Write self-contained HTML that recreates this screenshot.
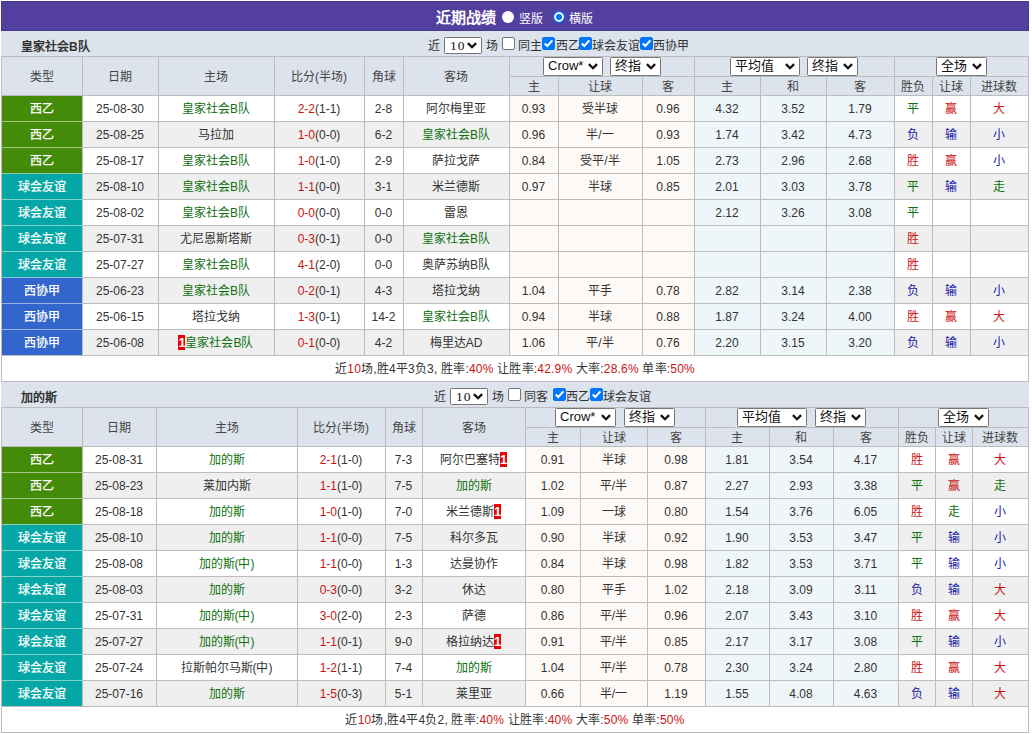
<!DOCTYPE html><html lang="zh-CN"><head><meta charset="utf-8"><style>
html,body{margin:0;padding:0;background:#fff;}
body{width:1032px;height:734px;overflow:hidden;position:relative;font-family:"Liberation Sans",sans-serif;font-size:12px;color:#333;}
body>div{position:absolute;}
.t{text-align:center;white-space:nowrap;color:#333;}
.l{white-space:nowrap;}
.sel{background:#fff;border:1px solid #767676;border-radius:1.5px;box-sizing:border-box;font-size:13px;color:#111;line-height:16px;}
.sel .sl{position:absolute;left:4px;top:0px;}
.sel .chev{position:absolute;right:4px;top:5px;}
.cb{width:13px;height:13px;box-sizing:border-box;border:1px solid #767676;border-radius:2px;background:#fff;}
.cb.on{background:#0075ff;border-color:#0075ff;}
.cb svg{position:absolute;left:-1px;top:-1px;}
.radio{width:12px;height:12px;border-radius:50%;background:#fff;box-sizing:border-box;}
.radio.on{background:#0075ff;border:1px solid #0075ff;box-shadow:inset 0 0 0 2px #fff;}
.rc{display:inline-block;background:#e00;color:#fff;font-weight:bold;width:7px;height:15px;line-height:15px;text-align:center;vertical-align:middle;font-size:13px;position:relative;top:-1px;overflow:hidden;}
</style></head><body><div style="left:1px;top:1px;width:1028px;height:30px;background:#523f9e;border:1px solid #463a8c;box-sizing:border-box"></div>
<div class="l" style="left:436px;top:3px;height:30px;line-height:30px;font-weight:bold;font-size:15px;color:#fff">近期战绩</div>
<div class="radio" style="left:502px;top:11px"></div>
<div class="l" style="left:519px;top:4px;height:30px;line-height:30px;color:#fff">竖版</div>
<div class="radio on" style="left:553px;top:11px"></div>
<div class="l" style="left:569px;top:4px;height:30px;line-height:30px;color:#fff">横版</div>
<div style="left:1px;top:31px;width:1028px;height:25px;background:#dde3ec;"></div>
<div class="l" style="left:21px;top:35px;height:25px;line-height:25px;font-weight:bold;color:#333;">皇家社会B队</div>
<div class="l" style="left:428px;top:34px;height:25px;line-height:25px;">近</div>
<div class="sel" style="left:444px;top:37px;width:38px;height:17px;"><span class="sl" style="font-family:'Liberation Serif',serif;font-size:13.5px;left:5px;top:0px;letter-spacing:1px">10</span><svg class="chev" style="top:4px" width="10" height="7" viewBox="0 0 10 7"><path d="M0.9 1.1 L5 5.2 L9.1 1.1" fill="none" stroke="#111" stroke-width="2.3"/></svg></div>
<div class="l" style="left:486px;top:34px;height:25px;line-height:25px;">场</div>
<div class="cb" style="left:502px;top:37px"></div>
<div class="l" style="left:518px;top:34px;height:25px;line-height:25px;">同主</div>
<div class="cb on" style="left:542px;top:37px"><svg width="13" height="13" viewBox="0 0 13 13"><path d="M2.8 6.4 L5.3 9 L10.4 3.4" fill="none" stroke="#fff" stroke-width="2.1"/></svg></div>
<div class="l" style="left:556px;top:34px;height:25px;line-height:25px;">西乙</div>
<div class="cb on" style="left:579px;top:37px"><svg width="13" height="13" viewBox="0 0 13 13"><path d="M2.8 6.4 L5.3 9 L10.4 3.4" fill="none" stroke="#fff" stroke-width="2.1"/></svg></div>
<div class="l" style="left:592px;top:34px;height:25px;line-height:25px;">球会友谊</div>
<div class="cb on" style="left:640px;top:37px"><svg width="13" height="13" viewBox="0 0 13 13"><path d="M2.8 6.4 L5.3 9 L10.4 3.4" fill="none" stroke="#fff" stroke-width="2.1"/></svg></div>
<div class="l" style="left:653px;top:34px;height:25px;line-height:25px;">西协甲</div>
<div style="left:1px;top:56px;width:1028px;height:39px;background:#dde3ec;"></div>
<div style="left:2px;top:96px;width:1026px;height:25px;background:#fff;"></div>
<div style="left:2px;top:95px;width:80px;height:26px;background:#448b0a;"></div>
<div style="left:510px;top:96px;width:184px;height:25px;background:#fdf9f6;"></div>
<div style="left:695px;top:96px;width:199px;height:25px;background:#eef6fa;"></div>
<div style="left:2px;top:122px;width:1026px;height:25px;background:#efefef;"></div>
<div style="left:2px;top:121px;width:80px;height:26px;background:#448b0a;"></div>
<div style="left:510px;top:122px;width:184px;height:25px;background:#fdf9f6;"></div>
<div style="left:695px;top:122px;width:199px;height:25px;background:#eef6fa;"></div>
<div style="left:2px;top:148px;width:1026px;height:25px;background:#fff;"></div>
<div style="left:2px;top:147px;width:80px;height:26px;background:#448b0a;"></div>
<div style="left:510px;top:148px;width:184px;height:25px;background:#fdf9f6;"></div>
<div style="left:695px;top:148px;width:199px;height:25px;background:#eef6fa;"></div>
<div style="left:2px;top:174px;width:1026px;height:25px;background:#efefef;"></div>
<div style="left:2px;top:173px;width:80px;height:26px;background:#04a7a6;"></div>
<div style="left:510px;top:174px;width:184px;height:25px;background:#fdf9f6;"></div>
<div style="left:695px;top:174px;width:199px;height:25px;background:#eef6fa;"></div>
<div style="left:2px;top:200px;width:1026px;height:25px;background:#fff;"></div>
<div style="left:2px;top:199px;width:80px;height:26px;background:#04a7a6;"></div>
<div style="left:510px;top:200px;width:184px;height:25px;background:#fdf9f6;"></div>
<div style="left:695px;top:200px;width:199px;height:25px;background:#eef6fa;"></div>
<div style="left:2px;top:226px;width:1026px;height:25px;background:#efefef;"></div>
<div style="left:2px;top:225px;width:80px;height:26px;background:#04a7a6;"></div>
<div style="left:510px;top:226px;width:184px;height:25px;background:#fdf9f6;"></div>
<div style="left:695px;top:226px;width:199px;height:25px;background:#eef6fa;"></div>
<div style="left:2px;top:252px;width:1026px;height:25px;background:#fff;"></div>
<div style="left:2px;top:251px;width:80px;height:26px;background:#04a7a6;"></div>
<div style="left:510px;top:252px;width:184px;height:25px;background:#fdf9f6;"></div>
<div style="left:695px;top:252px;width:199px;height:25px;background:#eef6fa;"></div>
<div style="left:2px;top:278px;width:1026px;height:25px;background:#efefef;"></div>
<div style="left:2px;top:277px;width:80px;height:26px;background:#3366cc;"></div>
<div style="left:510px;top:278px;width:184px;height:25px;background:#fdf9f6;"></div>
<div style="left:695px;top:278px;width:199px;height:25px;background:#eef6fa;"></div>
<div style="left:2px;top:304px;width:1026px;height:25px;background:#fff;"></div>
<div style="left:2px;top:303px;width:80px;height:26px;background:#3366cc;"></div>
<div style="left:510px;top:304px;width:184px;height:25px;background:#fdf9f6;"></div>
<div style="left:695px;top:304px;width:199px;height:25px;background:#eef6fa;"></div>
<div style="left:2px;top:330px;width:1026px;height:25px;background:#efefef;"></div>
<div style="left:2px;top:329px;width:80px;height:26px;background:#3366cc;"></div>
<div style="left:510px;top:330px;width:184px;height:25px;background:#fdf9f6;"></div>
<div style="left:695px;top:330px;width:199px;height:25px;background:#eef6fa;"></div>
<div style="left:2px;top:356px;width:1026px;height:25px;background:#fff;"></div>
<div style="left:1px;top:56px;width:1028px;height:1px;background:#bcbcbc"></div>
<div style="left:509px;top:76px;width:519px;height:1px;background:#bcbcbc"></div>
<div style="left:1px;top:95px;width:1028px;height:1px;background:#bcbcbc"></div>
<div style="left:1px;top:121px;width:1028px;height:1px;background:#bcbcbc"></div>
<div style="left:1px;top:147px;width:1028px;height:1px;background:#bcbcbc"></div>
<div style="left:1px;top:173px;width:1028px;height:1px;background:#bcbcbc"></div>
<div style="left:1px;top:199px;width:1028px;height:1px;background:#bcbcbc"></div>
<div style="left:1px;top:225px;width:1028px;height:1px;background:#bcbcbc"></div>
<div style="left:1px;top:251px;width:1028px;height:1px;background:#bcbcbc"></div>
<div style="left:1px;top:277px;width:1028px;height:1px;background:#bcbcbc"></div>
<div style="left:1px;top:303px;width:1028px;height:1px;background:#bcbcbc"></div>
<div style="left:1px;top:329px;width:1028px;height:1px;background:#bcbcbc"></div>
<div style="left:1px;top:355px;width:1028px;height:1px;background:#bcbcbc"></div>
<div style="left:1px;top:381px;width:1028px;height:1px;background:#bcbcbc"></div>
<div style="left:2px;top:121px;width:80px;height:1px;background:#a1c584"></div>
<div style="left:2px;top:147px;width:80px;height:1px;background:#a1c584"></div>
<div style="left:2px;top:173px;width:80px;height:1px;background:#91ccab"></div>
<div style="left:2px;top:199px;width:80px;height:1px;background:#81d3d2"></div>
<div style="left:2px;top:225px;width:80px;height:1px;background:#81d3d2"></div>
<div style="left:2px;top:251px;width:80px;height:1px;background:#81d3d2"></div>
<div style="left:2px;top:277px;width:80px;height:1px;background:#8dc2dc"></div>
<div style="left:2px;top:303px;width:80px;height:1px;background:#99b2e5"></div>
<div style="left:2px;top:329px;width:80px;height:1px;background:#99b2e5"></div>
<div style="left:1px;top:56px;width:1px;height:326px;background:#bcbcbc"></div>
<div style="left:1028px;top:56px;width:1px;height:326px;background:#bcbcbc"></div>
<div style="left:82px;top:56px;width:1px;height:299px;background:#bcbcbc"></div>
<div style="left:158px;top:56px;width:1px;height:299px;background:#bcbcbc"></div>
<div style="left:274px;top:56px;width:1px;height:299px;background:#bcbcbc"></div>
<div style="left:364px;top:56px;width:1px;height:299px;background:#bcbcbc"></div>
<div style="left:403px;top:56px;width:1px;height:299px;background:#bcbcbc"></div>
<div style="left:509px;top:56px;width:1px;height:299px;background:#bcbcbc"></div>
<div style="left:558px;top:76px;width:1px;height:279px;background:#bcbcbc"></div>
<div style="left:642px;top:76px;width:1px;height:279px;background:#bcbcbc"></div>
<div style="left:694px;top:56px;width:1px;height:299px;background:#bcbcbc"></div>
<div style="left:760px;top:76px;width:1px;height:279px;background:#bcbcbc"></div>
<div style="left:826px;top:76px;width:1px;height:279px;background:#bcbcbc"></div>
<div style="left:894px;top:56px;width:1px;height:299px;background:#bcbcbc"></div>
<div style="left:932px;top:76px;width:1px;height:279px;background:#bcbcbc"></div>
<div style="left:970px;top:76px;width:1px;height:279px;background:#bcbcbc"></div>
<div class="t" style="left:1px;top:58px;width:81px;height:38px;line-height:38px;color:#444">类型</div>
<div class="t" style="left:82px;top:58px;width:76px;height:38px;line-height:38px;color:#444">日期</div>
<div class="t" style="left:158px;top:58px;width:116px;height:38px;line-height:38px;color:#444">主场</div>
<div class="t" style="left:274px;top:58px;width:90px;height:38px;line-height:38px;color:#444">比分(半场)</div>
<div class="t" style="left:364px;top:58px;width:39px;height:38px;line-height:38px;color:#444">角球</div>
<div class="t" style="left:403px;top:58px;width:106px;height:38px;line-height:38px;color:#444">客场</div>
<div class="t" style="left:509px;top:78px;width:49px;height:18px;line-height:18px;color:#444">主</div>
<div class="t" style="left:558px;top:78px;width:84px;height:18px;line-height:18px;color:#444">让球</div>
<div class="t" style="left:642px;top:78px;width:52px;height:18px;line-height:18px;color:#444">客</div>
<div class="t" style="left:694px;top:78px;width:66px;height:18px;line-height:18px;color:#444">主</div>
<div class="t" style="left:760px;top:78px;width:66px;height:18px;line-height:18px;color:#444">和</div>
<div class="t" style="left:826px;top:78px;width:68px;height:18px;line-height:18px;color:#444">客</div>
<div class="t" style="left:894px;top:78px;width:38px;height:18px;line-height:18px;color:#444">胜负</div>
<div class="t" style="left:932px;top:78px;width:38px;height:18px;line-height:18px;color:#444">让球</div>
<div class="t" style="left:970px;top:78px;width:58px;height:18px;line-height:18px;color:#444">进球数</div>
<div class="sel" style="left:543px;top:57px;width:60px;height:19px;"><span class="sl" style="">Crow*</span><svg class="chev" style="top:5px" width="10" height="7" viewBox="0 0 10 7"><path d="M0.9 1.1 L5 5.2 L9.1 1.1" fill="none" stroke="#111" stroke-width="2.3"/></svg></div>
<div class="sel" style="left:610px;top:57px;width:51px;height:19px;"><span class="sl" style="">终指</span><svg class="chev" style="top:5px" width="10" height="7" viewBox="0 0 10 7"><path d="M0.9 1.1 L5 5.2 L9.1 1.1" fill="none" stroke="#111" stroke-width="2.3"/></svg></div>
<div class="sel" style="left:730px;top:57px;width:70px;height:19px;"><span class="sl" style="">平均值</span><svg class="chev" style="top:5px" width="10" height="7" viewBox="0 0 10 7"><path d="M0.9 1.1 L5 5.2 L9.1 1.1" fill="none" stroke="#111" stroke-width="2.3"/></svg></div>
<div class="sel" style="left:807px;top:57px;width:51px;height:19px;"><span class="sl" style="">终指</span><svg class="chev" style="top:5px" width="10" height="7" viewBox="0 0 10 7"><path d="M0.9 1.1 L5 5.2 L9.1 1.1" fill="none" stroke="#111" stroke-width="2.3"/></svg></div>
<div class="sel" style="left:936px;top:57px;width:51px;height:19px;"><span class="sl" style="">全场</span><svg class="chev" style="top:5px" width="10" height="7" viewBox="0 0 10 7"><path d="M0.9 1.1 L5 5.2 L9.1 1.1" fill="none" stroke="#111" stroke-width="2.3"/></svg></div>
<div class="t" style="left:1px;top:97px;width:81px;height:25px;line-height:25px;color:#fff;-webkit-text-stroke:0.25px #fff">西乙</div>
<div class="t" style="left:82px;top:97px;width:76px;height:25px;line-height:25px;">25-08-30</div>
<div class="t" style="left:158px;top:97px;width:116px;height:25px;line-height:25px;"><span style="color:#0e700e">皇家社会B队</span></div>
<div class="t" style="left:274px;top:97px;width:90px;height:25px;line-height:25px;"><span style="color:#c81414">2-2</span>(1-1)</div>
<div class="t" style="left:364px;top:97px;width:39px;height:25px;line-height:25px;">2-8</div>
<div class="t" style="left:403px;top:97px;width:106px;height:25px;line-height:25px;"><span style="color:#333">阿尔梅里亚</span></div>
<div class="t" style="left:509px;top:97px;width:49px;height:25px;line-height:25px;">0.93</div>
<div class="t" style="left:558px;top:97px;width:84px;height:25px;line-height:25px;">受半球</div>
<div class="t" style="left:642px;top:97px;width:52px;height:25px;line-height:25px;">0.96</div>
<div class="t" style="left:694px;top:97px;width:66px;height:25px;line-height:25px;">4.32</div>
<div class="t" style="left:760px;top:97px;width:66px;height:25px;line-height:25px;">3.52</div>
<div class="t" style="left:826px;top:97px;width:68px;height:25px;line-height:25px;">1.79</div>
<div class="t" style="left:894px;top:97px;width:38px;height:25px;line-height:25px;color:#0e700e">平</div>
<div class="t" style="left:932px;top:97px;width:38px;height:25px;line-height:25px;color:#c81414">赢</div>
<div class="t" style="left:970px;top:97px;width:58px;height:25px;line-height:25px;color:#c81414">大</div>
<div class="t" style="left:1px;top:123px;width:81px;height:25px;line-height:25px;color:#fff;-webkit-text-stroke:0.25px #fff">西乙</div>
<div class="t" style="left:82px;top:123px;width:76px;height:25px;line-height:25px;">25-08-25</div>
<div class="t" style="left:158px;top:123px;width:116px;height:25px;line-height:25px;"><span style="color:#333">马拉加</span></div>
<div class="t" style="left:274px;top:123px;width:90px;height:25px;line-height:25px;"><span style="color:#c81414">1-0</span>(0-0)</div>
<div class="t" style="left:364px;top:123px;width:39px;height:25px;line-height:25px;">6-2</div>
<div class="t" style="left:403px;top:123px;width:106px;height:25px;line-height:25px;"><span style="color:#0e700e">皇家社会B队</span></div>
<div class="t" style="left:509px;top:123px;width:49px;height:25px;line-height:25px;">0.96</div>
<div class="t" style="left:558px;top:123px;width:84px;height:25px;line-height:25px;">半/一</div>
<div class="t" style="left:642px;top:123px;width:52px;height:25px;line-height:25px;">0.93</div>
<div class="t" style="left:694px;top:123px;width:66px;height:25px;line-height:25px;">1.74</div>
<div class="t" style="left:760px;top:123px;width:66px;height:25px;line-height:25px;">3.42</div>
<div class="t" style="left:826px;top:123px;width:68px;height:25px;line-height:25px;">4.73</div>
<div class="t" style="left:894px;top:123px;width:38px;height:25px;line-height:25px;color:#1818a8">负</div>
<div class="t" style="left:932px;top:123px;width:38px;height:25px;line-height:25px;color:#1818a8">输</div>
<div class="t" style="left:970px;top:123px;width:58px;height:25px;line-height:25px;color:#1818a8">小</div>
<div class="t" style="left:1px;top:149px;width:81px;height:25px;line-height:25px;color:#fff;-webkit-text-stroke:0.25px #fff">西乙</div>
<div class="t" style="left:82px;top:149px;width:76px;height:25px;line-height:25px;">25-08-17</div>
<div class="t" style="left:158px;top:149px;width:116px;height:25px;line-height:25px;"><span style="color:#0e700e">皇家社会B队</span></div>
<div class="t" style="left:274px;top:149px;width:90px;height:25px;line-height:25px;"><span style="color:#c81414">1-0</span>(1-0)</div>
<div class="t" style="left:364px;top:149px;width:39px;height:25px;line-height:25px;">2-9</div>
<div class="t" style="left:403px;top:149px;width:106px;height:25px;line-height:25px;"><span style="color:#333">萨拉戈萨</span></div>
<div class="t" style="left:509px;top:149px;width:49px;height:25px;line-height:25px;">0.84</div>
<div class="t" style="left:558px;top:149px;width:84px;height:25px;line-height:25px;">受平/半</div>
<div class="t" style="left:642px;top:149px;width:52px;height:25px;line-height:25px;">1.05</div>
<div class="t" style="left:694px;top:149px;width:66px;height:25px;line-height:25px;">2.73</div>
<div class="t" style="left:760px;top:149px;width:66px;height:25px;line-height:25px;">2.96</div>
<div class="t" style="left:826px;top:149px;width:68px;height:25px;line-height:25px;">2.68</div>
<div class="t" style="left:894px;top:149px;width:38px;height:25px;line-height:25px;color:#c81414">胜</div>
<div class="t" style="left:932px;top:149px;width:38px;height:25px;line-height:25px;color:#c81414">赢</div>
<div class="t" style="left:970px;top:149px;width:58px;height:25px;line-height:25px;color:#1818a8">小</div>
<div class="t" style="left:1px;top:175px;width:81px;height:25px;line-height:25px;color:#fff;-webkit-text-stroke:0.25px #fff">球会友谊</div>
<div class="t" style="left:82px;top:175px;width:76px;height:25px;line-height:25px;">25-08-10</div>
<div class="t" style="left:158px;top:175px;width:116px;height:25px;line-height:25px;"><span style="color:#0e700e">皇家社会B队</span></div>
<div class="t" style="left:274px;top:175px;width:90px;height:25px;line-height:25px;"><span style="color:#c81414">1-1</span>(0-0)</div>
<div class="t" style="left:364px;top:175px;width:39px;height:25px;line-height:25px;">3-1</div>
<div class="t" style="left:403px;top:175px;width:106px;height:25px;line-height:25px;"><span style="color:#333">米兰德斯</span></div>
<div class="t" style="left:509px;top:175px;width:49px;height:25px;line-height:25px;">0.97</div>
<div class="t" style="left:558px;top:175px;width:84px;height:25px;line-height:25px;">半球</div>
<div class="t" style="left:642px;top:175px;width:52px;height:25px;line-height:25px;">0.85</div>
<div class="t" style="left:694px;top:175px;width:66px;height:25px;line-height:25px;">2.01</div>
<div class="t" style="left:760px;top:175px;width:66px;height:25px;line-height:25px;">3.03</div>
<div class="t" style="left:826px;top:175px;width:68px;height:25px;line-height:25px;">3.78</div>
<div class="t" style="left:894px;top:175px;width:38px;height:25px;line-height:25px;color:#0e700e">平</div>
<div class="t" style="left:932px;top:175px;width:38px;height:25px;line-height:25px;color:#1818a8">输</div>
<div class="t" style="left:970px;top:175px;width:58px;height:25px;line-height:25px;color:#0e700e">走</div>
<div class="t" style="left:1px;top:201px;width:81px;height:25px;line-height:25px;color:#fff;-webkit-text-stroke:0.25px #fff">球会友谊</div>
<div class="t" style="left:82px;top:201px;width:76px;height:25px;line-height:25px;">25-08-02</div>
<div class="t" style="left:158px;top:201px;width:116px;height:25px;line-height:25px;"><span style="color:#0e700e">皇家社会B队</span></div>
<div class="t" style="left:274px;top:201px;width:90px;height:25px;line-height:25px;"><span style="color:#c81414">0-0</span>(0-0)</div>
<div class="t" style="left:364px;top:201px;width:39px;height:25px;line-height:25px;">0-0</div>
<div class="t" style="left:403px;top:201px;width:106px;height:25px;line-height:25px;"><span style="color:#333">雷恩</span></div>
<div class="t" style="left:694px;top:201px;width:66px;height:25px;line-height:25px;">2.12</div>
<div class="t" style="left:760px;top:201px;width:66px;height:25px;line-height:25px;">3.26</div>
<div class="t" style="left:826px;top:201px;width:68px;height:25px;line-height:25px;">3.08</div>
<div class="t" style="left:894px;top:201px;width:38px;height:25px;line-height:25px;color:#0e700e">平</div>
<div class="t" style="left:1px;top:227px;width:81px;height:25px;line-height:25px;color:#fff;-webkit-text-stroke:0.25px #fff">球会友谊</div>
<div class="t" style="left:82px;top:227px;width:76px;height:25px;line-height:25px;">25-07-31</div>
<div class="t" style="left:158px;top:227px;width:116px;height:25px;line-height:25px;"><span style="color:#333">尤尼恩斯塔斯</span></div>
<div class="t" style="left:274px;top:227px;width:90px;height:25px;line-height:25px;"><span style="color:#c81414">0-3</span>(0-1)</div>
<div class="t" style="left:364px;top:227px;width:39px;height:25px;line-height:25px;">0-0</div>
<div class="t" style="left:403px;top:227px;width:106px;height:25px;line-height:25px;"><span style="color:#0e700e">皇家社会B队</span></div>
<div class="t" style="left:894px;top:227px;width:38px;height:25px;line-height:25px;color:#c81414">胜</div>
<div class="t" style="left:1px;top:253px;width:81px;height:25px;line-height:25px;color:#fff;-webkit-text-stroke:0.25px #fff">球会友谊</div>
<div class="t" style="left:82px;top:253px;width:76px;height:25px;line-height:25px;">25-07-27</div>
<div class="t" style="left:158px;top:253px;width:116px;height:25px;line-height:25px;"><span style="color:#0e700e">皇家社会B队</span></div>
<div class="t" style="left:274px;top:253px;width:90px;height:25px;line-height:25px;"><span style="color:#c81414">4-1</span>(2-0)</div>
<div class="t" style="left:364px;top:253px;width:39px;height:25px;line-height:25px;">0-0</div>
<div class="t" style="left:403px;top:253px;width:106px;height:25px;line-height:25px;"><span style="color:#333">奥萨苏纳B队</span></div>
<div class="t" style="left:894px;top:253px;width:38px;height:25px;line-height:25px;color:#c81414">胜</div>
<div class="t" style="left:1px;top:279px;width:81px;height:25px;line-height:25px;color:#fff;-webkit-text-stroke:0.25px #fff">西协甲</div>
<div class="t" style="left:82px;top:279px;width:76px;height:25px;line-height:25px;">25-06-23</div>
<div class="t" style="left:158px;top:279px;width:116px;height:25px;line-height:25px;"><span style="color:#0e700e">皇家社会B队</span></div>
<div class="t" style="left:274px;top:279px;width:90px;height:25px;line-height:25px;"><span style="color:#c81414">0-2</span>(0-1)</div>
<div class="t" style="left:364px;top:279px;width:39px;height:25px;line-height:25px;">4-3</div>
<div class="t" style="left:403px;top:279px;width:106px;height:25px;line-height:25px;"><span style="color:#333">塔拉戈纳</span></div>
<div class="t" style="left:509px;top:279px;width:49px;height:25px;line-height:25px;">1.04</div>
<div class="t" style="left:558px;top:279px;width:84px;height:25px;line-height:25px;">平手</div>
<div class="t" style="left:642px;top:279px;width:52px;height:25px;line-height:25px;">0.78</div>
<div class="t" style="left:694px;top:279px;width:66px;height:25px;line-height:25px;">2.82</div>
<div class="t" style="left:760px;top:279px;width:66px;height:25px;line-height:25px;">3.14</div>
<div class="t" style="left:826px;top:279px;width:68px;height:25px;line-height:25px;">2.38</div>
<div class="t" style="left:894px;top:279px;width:38px;height:25px;line-height:25px;color:#1818a8">负</div>
<div class="t" style="left:932px;top:279px;width:38px;height:25px;line-height:25px;color:#1818a8">输</div>
<div class="t" style="left:970px;top:279px;width:58px;height:25px;line-height:25px;color:#1818a8">小</div>
<div class="t" style="left:1px;top:305px;width:81px;height:25px;line-height:25px;color:#fff;-webkit-text-stroke:0.25px #fff">西协甲</div>
<div class="t" style="left:82px;top:305px;width:76px;height:25px;line-height:25px;">25-06-15</div>
<div class="t" style="left:158px;top:305px;width:116px;height:25px;line-height:25px;"><span style="color:#333">塔拉戈纳</span></div>
<div class="t" style="left:274px;top:305px;width:90px;height:25px;line-height:25px;"><span style="color:#c81414">1-3</span>(0-1)</div>
<div class="t" style="left:364px;top:305px;width:39px;height:25px;line-height:25px;">14-2</div>
<div class="t" style="left:403px;top:305px;width:106px;height:25px;line-height:25px;"><span style="color:#0e700e">皇家社会B队</span></div>
<div class="t" style="left:509px;top:305px;width:49px;height:25px;line-height:25px;">0.94</div>
<div class="t" style="left:558px;top:305px;width:84px;height:25px;line-height:25px;">半球</div>
<div class="t" style="left:642px;top:305px;width:52px;height:25px;line-height:25px;">0.88</div>
<div class="t" style="left:694px;top:305px;width:66px;height:25px;line-height:25px;">1.87</div>
<div class="t" style="left:760px;top:305px;width:66px;height:25px;line-height:25px;">3.24</div>
<div class="t" style="left:826px;top:305px;width:68px;height:25px;line-height:25px;">4.00</div>
<div class="t" style="left:894px;top:305px;width:38px;height:25px;line-height:25px;color:#c81414">胜</div>
<div class="t" style="left:932px;top:305px;width:38px;height:25px;line-height:25px;color:#c81414">赢</div>
<div class="t" style="left:970px;top:305px;width:58px;height:25px;line-height:25px;color:#c81414">大</div>
<div class="t" style="left:1px;top:331px;width:81px;height:25px;line-height:25px;color:#fff;-webkit-text-stroke:0.25px #fff">西协甲</div>
<div class="t" style="left:82px;top:331px;width:76px;height:25px;line-height:25px;">25-06-08</div>
<div class="t" style="left:158px;top:331px;width:116px;height:25px;line-height:25px;"><span class="rc">1</span><span style="color:#0e700e">皇家社会B队</span></div>
<div class="t" style="left:274px;top:331px;width:90px;height:25px;line-height:25px;"><span style="color:#c81414">0-1</span>(0-0)</div>
<div class="t" style="left:364px;top:331px;width:39px;height:25px;line-height:25px;">4-2</div>
<div class="t" style="left:403px;top:331px;width:106px;height:25px;line-height:25px;"><span style="color:#333">梅里达AD</span></div>
<div class="t" style="left:509px;top:331px;width:49px;height:25px;line-height:25px;">1.06</div>
<div class="t" style="left:558px;top:331px;width:84px;height:25px;line-height:25px;">平/半</div>
<div class="t" style="left:642px;top:331px;width:52px;height:25px;line-height:25px;">0.76</div>
<div class="t" style="left:694px;top:331px;width:66px;height:25px;line-height:25px;">2.20</div>
<div class="t" style="left:760px;top:331px;width:66px;height:25px;line-height:25px;">3.15</div>
<div class="t" style="left:826px;top:331px;width:68px;height:25px;line-height:25px;">3.20</div>
<div class="t" style="left:894px;top:331px;width:38px;height:25px;line-height:25px;color:#1818a8">负</div>
<div class="t" style="left:932px;top:331px;width:38px;height:25px;line-height:25px;color:#1818a8">输</div>
<div class="t" style="left:970px;top:331px;width:58px;height:25px;line-height:25px;color:#1818a8">小</div>
<div class="t" style="left:1px;top:357px;width:1028px;height:25px;line-height:25px;letter-spacing:0.2px">近<span style="color:#c81414">10</span>场,胜4平3负3, 胜率:<span style="color:#c81414">40%</span> 让胜率:<span style="color:#c81414">42.9%</span> 大率:<span style="color:#c81414">28.6%</span> 单率:<span style="color:#c81414">50%</span></div>
<div style="left:1px;top:382px;width:1028px;height:25px;background:#dde3ec;"></div>
<div class="l" style="left:21px;top:386px;height:25px;line-height:25px;font-weight:bold;color:#333;">加的斯</div>
<div class="l" style="left:434px;top:385px;height:25px;line-height:25px;">近</div>
<div class="sel" style="left:450px;top:388px;width:38px;height:17px;"><span class="sl" style="font-family:'Liberation Serif',serif;font-size:13.5px;left:5px;top:0px;letter-spacing:1px">10</span><svg class="chev" style="top:4px" width="10" height="7" viewBox="0 0 10 7"><path d="M0.9 1.1 L5 5.2 L9.1 1.1" fill="none" stroke="#111" stroke-width="2.3"/></svg></div>
<div class="l" style="left:492px;top:385px;height:25px;line-height:25px;">场</div>
<div class="cb" style="left:508px;top:388px"></div>
<div class="l" style="left:524px;top:385px;height:25px;line-height:25px;">同客</div>
<div class="cb on" style="left:553px;top:388px"><svg width="13" height="13" viewBox="0 0 13 13"><path d="M2.8 6.4 L5.3 9 L10.4 3.4" fill="none" stroke="#fff" stroke-width="2.1"/></svg></div>
<div class="l" style="left:566px;top:385px;height:25px;line-height:25px;">西乙</div>
<div class="cb on" style="left:590px;top:388px"><svg width="13" height="13" viewBox="0 0 13 13"><path d="M2.8 6.4 L5.3 9 L10.4 3.4" fill="none" stroke="#fff" stroke-width="2.1"/></svg></div>
<div class="l" style="left:603px;top:385px;height:25px;line-height:25px;">球会友谊</div>
<div style="left:1px;top:407px;width:1028px;height:39px;background:#dde3ec;"></div>
<div style="left:2px;top:447px;width:1026px;height:25px;background:#fff;"></div>
<div style="left:2px;top:446px;width:80px;height:26px;background:#448b0a;"></div>
<div style="left:526px;top:447px;width:179px;height:25px;background:#fdf9f6;"></div>
<div style="left:706px;top:447px;width:192px;height:25px;background:#eef6fa;"></div>
<div style="left:2px;top:473px;width:1026px;height:25px;background:#efefef;"></div>
<div style="left:2px;top:472px;width:80px;height:26px;background:#448b0a;"></div>
<div style="left:526px;top:473px;width:179px;height:25px;background:#fdf9f6;"></div>
<div style="left:706px;top:473px;width:192px;height:25px;background:#eef6fa;"></div>
<div style="left:2px;top:499px;width:1026px;height:25px;background:#fff;"></div>
<div style="left:2px;top:498px;width:80px;height:26px;background:#448b0a;"></div>
<div style="left:526px;top:499px;width:179px;height:25px;background:#fdf9f6;"></div>
<div style="left:706px;top:499px;width:192px;height:25px;background:#eef6fa;"></div>
<div style="left:2px;top:525px;width:1026px;height:25px;background:#efefef;"></div>
<div style="left:2px;top:524px;width:80px;height:26px;background:#04a7a6;"></div>
<div style="left:526px;top:525px;width:179px;height:25px;background:#fdf9f6;"></div>
<div style="left:706px;top:525px;width:192px;height:25px;background:#eef6fa;"></div>
<div style="left:2px;top:551px;width:1026px;height:25px;background:#fff;"></div>
<div style="left:2px;top:550px;width:80px;height:26px;background:#04a7a6;"></div>
<div style="left:526px;top:551px;width:179px;height:25px;background:#fdf9f6;"></div>
<div style="left:706px;top:551px;width:192px;height:25px;background:#eef6fa;"></div>
<div style="left:2px;top:577px;width:1026px;height:25px;background:#efefef;"></div>
<div style="left:2px;top:576px;width:80px;height:26px;background:#04a7a6;"></div>
<div style="left:526px;top:577px;width:179px;height:25px;background:#fdf9f6;"></div>
<div style="left:706px;top:577px;width:192px;height:25px;background:#eef6fa;"></div>
<div style="left:2px;top:603px;width:1026px;height:25px;background:#fff;"></div>
<div style="left:2px;top:602px;width:80px;height:26px;background:#04a7a6;"></div>
<div style="left:526px;top:603px;width:179px;height:25px;background:#fdf9f6;"></div>
<div style="left:706px;top:603px;width:192px;height:25px;background:#eef6fa;"></div>
<div style="left:2px;top:629px;width:1026px;height:25px;background:#efefef;"></div>
<div style="left:2px;top:628px;width:80px;height:26px;background:#04a7a6;"></div>
<div style="left:526px;top:629px;width:179px;height:25px;background:#fdf9f6;"></div>
<div style="left:706px;top:629px;width:192px;height:25px;background:#eef6fa;"></div>
<div style="left:2px;top:655px;width:1026px;height:25px;background:#fff;"></div>
<div style="left:2px;top:654px;width:80px;height:26px;background:#04a7a6;"></div>
<div style="left:526px;top:655px;width:179px;height:25px;background:#fdf9f6;"></div>
<div style="left:706px;top:655px;width:192px;height:25px;background:#eef6fa;"></div>
<div style="left:2px;top:681px;width:1026px;height:25px;background:#efefef;"></div>
<div style="left:2px;top:680px;width:80px;height:26px;background:#04a7a6;"></div>
<div style="left:526px;top:681px;width:179px;height:25px;background:#fdf9f6;"></div>
<div style="left:706px;top:681px;width:192px;height:25px;background:#eef6fa;"></div>
<div style="left:2px;top:707px;width:1026px;height:25px;background:#fff;"></div>
<div style="left:1px;top:407px;width:1028px;height:1px;background:#bcbcbc"></div>
<div style="left:525px;top:427px;width:503px;height:1px;background:#bcbcbc"></div>
<div style="left:1px;top:446px;width:1028px;height:1px;background:#bcbcbc"></div>
<div style="left:1px;top:472px;width:1028px;height:1px;background:#bcbcbc"></div>
<div style="left:1px;top:498px;width:1028px;height:1px;background:#bcbcbc"></div>
<div style="left:1px;top:524px;width:1028px;height:1px;background:#bcbcbc"></div>
<div style="left:1px;top:550px;width:1028px;height:1px;background:#bcbcbc"></div>
<div style="left:1px;top:576px;width:1028px;height:1px;background:#bcbcbc"></div>
<div style="left:1px;top:602px;width:1028px;height:1px;background:#bcbcbc"></div>
<div style="left:1px;top:628px;width:1028px;height:1px;background:#bcbcbc"></div>
<div style="left:1px;top:654px;width:1028px;height:1px;background:#bcbcbc"></div>
<div style="left:1px;top:680px;width:1028px;height:1px;background:#bcbcbc"></div>
<div style="left:1px;top:706px;width:1028px;height:1px;background:#bcbcbc"></div>
<div style="left:1px;top:732px;width:1028px;height:1px;background:#bcbcbc"></div>
<div style="left:2px;top:472px;width:80px;height:1px;background:#a1c584"></div>
<div style="left:2px;top:498px;width:80px;height:1px;background:#a1c584"></div>
<div style="left:2px;top:524px;width:80px;height:1px;background:#91ccab"></div>
<div style="left:2px;top:550px;width:80px;height:1px;background:#81d3d2"></div>
<div style="left:2px;top:576px;width:80px;height:1px;background:#81d3d2"></div>
<div style="left:2px;top:602px;width:80px;height:1px;background:#81d3d2"></div>
<div style="left:2px;top:628px;width:80px;height:1px;background:#81d3d2"></div>
<div style="left:2px;top:654px;width:80px;height:1px;background:#81d3d2"></div>
<div style="left:2px;top:680px;width:80px;height:1px;background:#81d3d2"></div>
<div style="left:1px;top:407px;width:1px;height:326px;background:#bcbcbc"></div>
<div style="left:1028px;top:407px;width:1px;height:326px;background:#bcbcbc"></div>
<div style="left:82px;top:407px;width:1px;height:299px;background:#bcbcbc"></div>
<div style="left:156px;top:407px;width:1px;height:299px;background:#bcbcbc"></div>
<div style="left:297px;top:407px;width:1px;height:299px;background:#bcbcbc"></div>
<div style="left:385px;top:407px;width:1px;height:299px;background:#bcbcbc"></div>
<div style="left:422px;top:407px;width:1px;height:299px;background:#bcbcbc"></div>
<div style="left:525px;top:407px;width:1px;height:299px;background:#bcbcbc"></div>
<div style="left:580px;top:427px;width:1px;height:279px;background:#bcbcbc"></div>
<div style="left:647px;top:427px;width:1px;height:279px;background:#bcbcbc"></div>
<div style="left:705px;top:407px;width:1px;height:299px;background:#bcbcbc"></div>
<div style="left:769px;top:427px;width:1px;height:279px;background:#bcbcbc"></div>
<div style="left:833px;top:427px;width:1px;height:279px;background:#bcbcbc"></div>
<div style="left:898px;top:407px;width:1px;height:299px;background:#bcbcbc"></div>
<div style="left:935px;top:427px;width:1px;height:279px;background:#bcbcbc"></div>
<div style="left:972px;top:427px;width:1px;height:279px;background:#bcbcbc"></div>
<div class="t" style="left:1px;top:409px;width:81px;height:38px;line-height:38px;color:#444">类型</div>
<div class="t" style="left:82px;top:409px;width:74px;height:38px;line-height:38px;color:#444">日期</div>
<div class="t" style="left:156px;top:409px;width:141px;height:38px;line-height:38px;color:#444">主场</div>
<div class="t" style="left:297px;top:409px;width:88px;height:38px;line-height:38px;color:#444">比分(半场)</div>
<div class="t" style="left:385px;top:409px;width:37px;height:38px;line-height:38px;color:#444">角球</div>
<div class="t" style="left:422px;top:409px;width:103px;height:38px;line-height:38px;color:#444">客场</div>
<div class="t" style="left:525px;top:429px;width:55px;height:18px;line-height:18px;color:#444">主</div>
<div class="t" style="left:580px;top:429px;width:67px;height:18px;line-height:18px;color:#444">让球</div>
<div class="t" style="left:647px;top:429px;width:58px;height:18px;line-height:18px;color:#444">客</div>
<div class="t" style="left:705px;top:429px;width:64px;height:18px;line-height:18px;color:#444">主</div>
<div class="t" style="left:769px;top:429px;width:64px;height:18px;line-height:18px;color:#444">和</div>
<div class="t" style="left:833px;top:429px;width:65px;height:18px;line-height:18px;color:#444">客</div>
<div class="t" style="left:898px;top:429px;width:37px;height:18px;line-height:18px;color:#444">胜负</div>
<div class="t" style="left:935px;top:429px;width:37px;height:18px;line-height:18px;color:#444">让球</div>
<div class="t" style="left:972px;top:429px;width:56px;height:18px;line-height:18px;color:#444">进球数</div>
<div class="sel" style="left:555px;top:408px;width:61px;height:19px;"><span class="sl" style="">Crow*</span><svg class="chev" style="top:5px" width="10" height="7" viewBox="0 0 10 7"><path d="M0.9 1.1 L5 5.2 L9.1 1.1" fill="none" stroke="#111" stroke-width="2.3"/></svg></div>
<div class="sel" style="left:624px;top:408px;width:51px;height:19px;"><span class="sl" style="">终指</span><svg class="chev" style="top:5px" width="10" height="7" viewBox="0 0 10 7"><path d="M0.9 1.1 L5 5.2 L9.1 1.1" fill="none" stroke="#111" stroke-width="2.3"/></svg></div>
<div class="sel" style="left:737px;top:408px;width:70px;height:19px;"><span class="sl" style="">平均值</span><svg class="chev" style="top:5px" width="10" height="7" viewBox="0 0 10 7"><path d="M0.9 1.1 L5 5.2 L9.1 1.1" fill="none" stroke="#111" stroke-width="2.3"/></svg></div>
<div class="sel" style="left:815px;top:408px;width:51px;height:19px;"><span class="sl" style="">终指</span><svg class="chev" style="top:5px" width="10" height="7" viewBox="0 0 10 7"><path d="M0.9 1.1 L5 5.2 L9.1 1.1" fill="none" stroke="#111" stroke-width="2.3"/></svg></div>
<div class="sel" style="left:938px;top:408px;width:51px;height:19px;"><span class="sl" style="">全场</span><svg class="chev" style="top:5px" width="10" height="7" viewBox="0 0 10 7"><path d="M0.9 1.1 L5 5.2 L9.1 1.1" fill="none" stroke="#111" stroke-width="2.3"/></svg></div>
<div class="t" style="left:1px;top:448px;width:81px;height:25px;line-height:25px;color:#fff;-webkit-text-stroke:0.25px #fff">西乙</div>
<div class="t" style="left:82px;top:448px;width:74px;height:25px;line-height:25px;">25-08-31</div>
<div class="t" style="left:156px;top:448px;width:141px;height:25px;line-height:25px;"><span style="color:#0e700e">加的斯</span></div>
<div class="t" style="left:297px;top:448px;width:88px;height:25px;line-height:25px;"><span style="color:#c81414">2-1</span>(1-0)</div>
<div class="t" style="left:385px;top:448px;width:37px;height:25px;line-height:25px;">7-3</div>
<div class="t" style="left:422px;top:448px;width:103px;height:25px;line-height:25px;"><span style="color:#333">阿尔巴塞特</span><span class="rc">1</span></div>
<div class="t" style="left:525px;top:448px;width:55px;height:25px;line-height:25px;">0.91</div>
<div class="t" style="left:580px;top:448px;width:67px;height:25px;line-height:25px;">半球</div>
<div class="t" style="left:647px;top:448px;width:58px;height:25px;line-height:25px;">0.98</div>
<div class="t" style="left:705px;top:448px;width:64px;height:25px;line-height:25px;">1.81</div>
<div class="t" style="left:769px;top:448px;width:64px;height:25px;line-height:25px;">3.54</div>
<div class="t" style="left:833px;top:448px;width:65px;height:25px;line-height:25px;">4.17</div>
<div class="t" style="left:898px;top:448px;width:37px;height:25px;line-height:25px;color:#c81414">胜</div>
<div class="t" style="left:935px;top:448px;width:37px;height:25px;line-height:25px;color:#c81414">赢</div>
<div class="t" style="left:972px;top:448px;width:56px;height:25px;line-height:25px;color:#c81414">大</div>
<div class="t" style="left:1px;top:474px;width:81px;height:25px;line-height:25px;color:#fff;-webkit-text-stroke:0.25px #fff">西乙</div>
<div class="t" style="left:82px;top:474px;width:74px;height:25px;line-height:25px;">25-08-23</div>
<div class="t" style="left:156px;top:474px;width:141px;height:25px;line-height:25px;"><span style="color:#333">莱加内斯</span></div>
<div class="t" style="left:297px;top:474px;width:88px;height:25px;line-height:25px;"><span style="color:#c81414">1-1</span>(1-0)</div>
<div class="t" style="left:385px;top:474px;width:37px;height:25px;line-height:25px;">7-5</div>
<div class="t" style="left:422px;top:474px;width:103px;height:25px;line-height:25px;"><span style="color:#0e700e">加的斯</span></div>
<div class="t" style="left:525px;top:474px;width:55px;height:25px;line-height:25px;">1.02</div>
<div class="t" style="left:580px;top:474px;width:67px;height:25px;line-height:25px;">平/半</div>
<div class="t" style="left:647px;top:474px;width:58px;height:25px;line-height:25px;">0.87</div>
<div class="t" style="left:705px;top:474px;width:64px;height:25px;line-height:25px;">2.27</div>
<div class="t" style="left:769px;top:474px;width:64px;height:25px;line-height:25px;">2.93</div>
<div class="t" style="left:833px;top:474px;width:65px;height:25px;line-height:25px;">3.38</div>
<div class="t" style="left:898px;top:474px;width:37px;height:25px;line-height:25px;color:#0e700e">平</div>
<div class="t" style="left:935px;top:474px;width:37px;height:25px;line-height:25px;color:#c81414">赢</div>
<div class="t" style="left:972px;top:474px;width:56px;height:25px;line-height:25px;color:#0e700e">走</div>
<div class="t" style="left:1px;top:500px;width:81px;height:25px;line-height:25px;color:#fff;-webkit-text-stroke:0.25px #fff">西乙</div>
<div class="t" style="left:82px;top:500px;width:74px;height:25px;line-height:25px;">25-08-18</div>
<div class="t" style="left:156px;top:500px;width:141px;height:25px;line-height:25px;"><span style="color:#0e700e">加的斯</span></div>
<div class="t" style="left:297px;top:500px;width:88px;height:25px;line-height:25px;"><span style="color:#c81414">1-0</span>(1-0)</div>
<div class="t" style="left:385px;top:500px;width:37px;height:25px;line-height:25px;">7-0</div>
<div class="t" style="left:422px;top:500px;width:103px;height:25px;line-height:25px;"><span style="color:#333">米兰德斯</span><span class="rc">1</span></div>
<div class="t" style="left:525px;top:500px;width:55px;height:25px;line-height:25px;">1.09</div>
<div class="t" style="left:580px;top:500px;width:67px;height:25px;line-height:25px;">一球</div>
<div class="t" style="left:647px;top:500px;width:58px;height:25px;line-height:25px;">0.80</div>
<div class="t" style="left:705px;top:500px;width:64px;height:25px;line-height:25px;">1.54</div>
<div class="t" style="left:769px;top:500px;width:64px;height:25px;line-height:25px;">3.76</div>
<div class="t" style="left:833px;top:500px;width:65px;height:25px;line-height:25px;">6.05</div>
<div class="t" style="left:898px;top:500px;width:37px;height:25px;line-height:25px;color:#c81414">胜</div>
<div class="t" style="left:935px;top:500px;width:37px;height:25px;line-height:25px;color:#0e700e">走</div>
<div class="t" style="left:972px;top:500px;width:56px;height:25px;line-height:25px;color:#1818a8">小</div>
<div class="t" style="left:1px;top:526px;width:81px;height:25px;line-height:25px;color:#fff;-webkit-text-stroke:0.25px #fff">球会友谊</div>
<div class="t" style="left:82px;top:526px;width:74px;height:25px;line-height:25px;">25-08-10</div>
<div class="t" style="left:156px;top:526px;width:141px;height:25px;line-height:25px;"><span style="color:#0e700e">加的斯</span></div>
<div class="t" style="left:297px;top:526px;width:88px;height:25px;line-height:25px;"><span style="color:#c81414">1-1</span>(0-0)</div>
<div class="t" style="left:385px;top:526px;width:37px;height:25px;line-height:25px;">7-5</div>
<div class="t" style="left:422px;top:526px;width:103px;height:25px;line-height:25px;"><span style="color:#333">科尔多瓦</span></div>
<div class="t" style="left:525px;top:526px;width:55px;height:25px;line-height:25px;">0.90</div>
<div class="t" style="left:580px;top:526px;width:67px;height:25px;line-height:25px;">半球</div>
<div class="t" style="left:647px;top:526px;width:58px;height:25px;line-height:25px;">0.92</div>
<div class="t" style="left:705px;top:526px;width:64px;height:25px;line-height:25px;">1.90</div>
<div class="t" style="left:769px;top:526px;width:64px;height:25px;line-height:25px;">3.53</div>
<div class="t" style="left:833px;top:526px;width:65px;height:25px;line-height:25px;">3.47</div>
<div class="t" style="left:898px;top:526px;width:37px;height:25px;line-height:25px;color:#0e700e">平</div>
<div class="t" style="left:935px;top:526px;width:37px;height:25px;line-height:25px;color:#1818a8">输</div>
<div class="t" style="left:972px;top:526px;width:56px;height:25px;line-height:25px;color:#1818a8">小</div>
<div class="t" style="left:1px;top:552px;width:81px;height:25px;line-height:25px;color:#fff;-webkit-text-stroke:0.25px #fff">球会友谊</div>
<div class="t" style="left:82px;top:552px;width:74px;height:25px;line-height:25px;">25-08-08</div>
<div class="t" style="left:156px;top:552px;width:141px;height:25px;line-height:25px;"><span style="color:#0e700e">加的斯(中)</span></div>
<div class="t" style="left:297px;top:552px;width:88px;height:25px;line-height:25px;"><span style="color:#c81414">1-1</span>(0-0)</div>
<div class="t" style="left:385px;top:552px;width:37px;height:25px;line-height:25px;">1-3</div>
<div class="t" style="left:422px;top:552px;width:103px;height:25px;line-height:25px;"><span style="color:#333">达曼协作</span></div>
<div class="t" style="left:525px;top:552px;width:55px;height:25px;line-height:25px;">0.84</div>
<div class="t" style="left:580px;top:552px;width:67px;height:25px;line-height:25px;">半球</div>
<div class="t" style="left:647px;top:552px;width:58px;height:25px;line-height:25px;">0.98</div>
<div class="t" style="left:705px;top:552px;width:64px;height:25px;line-height:25px;">1.82</div>
<div class="t" style="left:769px;top:552px;width:64px;height:25px;line-height:25px;">3.53</div>
<div class="t" style="left:833px;top:552px;width:65px;height:25px;line-height:25px;">3.71</div>
<div class="t" style="left:898px;top:552px;width:37px;height:25px;line-height:25px;color:#0e700e">平</div>
<div class="t" style="left:935px;top:552px;width:37px;height:25px;line-height:25px;color:#1818a8">输</div>
<div class="t" style="left:972px;top:552px;width:56px;height:25px;line-height:25px;color:#1818a8">小</div>
<div class="t" style="left:1px;top:578px;width:81px;height:25px;line-height:25px;color:#fff;-webkit-text-stroke:0.25px #fff">球会友谊</div>
<div class="t" style="left:82px;top:578px;width:74px;height:25px;line-height:25px;">25-08-03</div>
<div class="t" style="left:156px;top:578px;width:141px;height:25px;line-height:25px;"><span style="color:#0e700e">加的斯</span></div>
<div class="t" style="left:297px;top:578px;width:88px;height:25px;line-height:25px;"><span style="color:#c81414">0-3</span>(0-0)</div>
<div class="t" style="left:385px;top:578px;width:37px;height:25px;line-height:25px;">3-2</div>
<div class="t" style="left:422px;top:578px;width:103px;height:25px;line-height:25px;"><span style="color:#333">休达</span></div>
<div class="t" style="left:525px;top:578px;width:55px;height:25px;line-height:25px;">0.80</div>
<div class="t" style="left:580px;top:578px;width:67px;height:25px;line-height:25px;">平手</div>
<div class="t" style="left:647px;top:578px;width:58px;height:25px;line-height:25px;">1.02</div>
<div class="t" style="left:705px;top:578px;width:64px;height:25px;line-height:25px;">2.18</div>
<div class="t" style="left:769px;top:578px;width:64px;height:25px;line-height:25px;">3.09</div>
<div class="t" style="left:833px;top:578px;width:65px;height:25px;line-height:25px;">3.11</div>
<div class="t" style="left:898px;top:578px;width:37px;height:25px;line-height:25px;color:#1818a8">负</div>
<div class="t" style="left:935px;top:578px;width:37px;height:25px;line-height:25px;color:#1818a8">输</div>
<div class="t" style="left:972px;top:578px;width:56px;height:25px;line-height:25px;color:#c81414">大</div>
<div class="t" style="left:1px;top:604px;width:81px;height:25px;line-height:25px;color:#fff;-webkit-text-stroke:0.25px #fff">球会友谊</div>
<div class="t" style="left:82px;top:604px;width:74px;height:25px;line-height:25px;">25-07-31</div>
<div class="t" style="left:156px;top:604px;width:141px;height:25px;line-height:25px;"><span style="color:#0e700e">加的斯(中)</span></div>
<div class="t" style="left:297px;top:604px;width:88px;height:25px;line-height:25px;"><span style="color:#c81414">3-0</span>(2-0)</div>
<div class="t" style="left:385px;top:604px;width:37px;height:25px;line-height:25px;">2-3</div>
<div class="t" style="left:422px;top:604px;width:103px;height:25px;line-height:25px;"><span style="color:#333">萨德</span></div>
<div class="t" style="left:525px;top:604px;width:55px;height:25px;line-height:25px;">0.86</div>
<div class="t" style="left:580px;top:604px;width:67px;height:25px;line-height:25px;">平/半</div>
<div class="t" style="left:647px;top:604px;width:58px;height:25px;line-height:25px;">0.96</div>
<div class="t" style="left:705px;top:604px;width:64px;height:25px;line-height:25px;">2.07</div>
<div class="t" style="left:769px;top:604px;width:64px;height:25px;line-height:25px;">3.43</div>
<div class="t" style="left:833px;top:604px;width:65px;height:25px;line-height:25px;">3.10</div>
<div class="t" style="left:898px;top:604px;width:37px;height:25px;line-height:25px;color:#c81414">胜</div>
<div class="t" style="left:935px;top:604px;width:37px;height:25px;line-height:25px;color:#c81414">赢</div>
<div class="t" style="left:972px;top:604px;width:56px;height:25px;line-height:25px;color:#c81414">大</div>
<div class="t" style="left:1px;top:630px;width:81px;height:25px;line-height:25px;color:#fff;-webkit-text-stroke:0.25px #fff">球会友谊</div>
<div class="t" style="left:82px;top:630px;width:74px;height:25px;line-height:25px;">25-07-27</div>
<div class="t" style="left:156px;top:630px;width:141px;height:25px;line-height:25px;"><span style="color:#0e700e">加的斯(中)</span></div>
<div class="t" style="left:297px;top:630px;width:88px;height:25px;line-height:25px;"><span style="color:#c81414">1-1</span>(0-1)</div>
<div class="t" style="left:385px;top:630px;width:37px;height:25px;line-height:25px;">9-0</div>
<div class="t" style="left:422px;top:630px;width:103px;height:25px;line-height:25px;"><span style="color:#333">格拉纳达</span><span class="rc">1</span></div>
<div class="t" style="left:525px;top:630px;width:55px;height:25px;line-height:25px;">0.91</div>
<div class="t" style="left:580px;top:630px;width:67px;height:25px;line-height:25px;">平/半</div>
<div class="t" style="left:647px;top:630px;width:58px;height:25px;line-height:25px;">0.85</div>
<div class="t" style="left:705px;top:630px;width:64px;height:25px;line-height:25px;">2.17</div>
<div class="t" style="left:769px;top:630px;width:64px;height:25px;line-height:25px;">3.17</div>
<div class="t" style="left:833px;top:630px;width:65px;height:25px;line-height:25px;">3.08</div>
<div class="t" style="left:898px;top:630px;width:37px;height:25px;line-height:25px;color:#0e700e">平</div>
<div class="t" style="left:935px;top:630px;width:37px;height:25px;line-height:25px;color:#1818a8">输</div>
<div class="t" style="left:972px;top:630px;width:56px;height:25px;line-height:25px;color:#1818a8">小</div>
<div class="t" style="left:1px;top:656px;width:81px;height:25px;line-height:25px;color:#fff;-webkit-text-stroke:0.25px #fff">球会友谊</div>
<div class="t" style="left:82px;top:656px;width:74px;height:25px;line-height:25px;">25-07-24</div>
<div class="t" style="left:156px;top:656px;width:141px;height:25px;line-height:25px;"><span style="color:#333">拉斯帕尔马斯(中)</span></div>
<div class="t" style="left:297px;top:656px;width:88px;height:25px;line-height:25px;"><span style="color:#c81414">1-2</span>(1-1)</div>
<div class="t" style="left:385px;top:656px;width:37px;height:25px;line-height:25px;">7-4</div>
<div class="t" style="left:422px;top:656px;width:103px;height:25px;line-height:25px;"><span style="color:#0e700e">加的斯</span></div>
<div class="t" style="left:525px;top:656px;width:55px;height:25px;line-height:25px;">1.04</div>
<div class="t" style="left:580px;top:656px;width:67px;height:25px;line-height:25px;">平/半</div>
<div class="t" style="left:647px;top:656px;width:58px;height:25px;line-height:25px;">0.78</div>
<div class="t" style="left:705px;top:656px;width:64px;height:25px;line-height:25px;">2.30</div>
<div class="t" style="left:769px;top:656px;width:64px;height:25px;line-height:25px;">3.24</div>
<div class="t" style="left:833px;top:656px;width:65px;height:25px;line-height:25px;">2.80</div>
<div class="t" style="left:898px;top:656px;width:37px;height:25px;line-height:25px;color:#c81414">胜</div>
<div class="t" style="left:935px;top:656px;width:37px;height:25px;line-height:25px;color:#c81414">赢</div>
<div class="t" style="left:972px;top:656px;width:56px;height:25px;line-height:25px;color:#c81414">大</div>
<div class="t" style="left:1px;top:682px;width:81px;height:25px;line-height:25px;color:#fff;-webkit-text-stroke:0.25px #fff">球会友谊</div>
<div class="t" style="left:82px;top:682px;width:74px;height:25px;line-height:25px;">25-07-16</div>
<div class="t" style="left:156px;top:682px;width:141px;height:25px;line-height:25px;"><span style="color:#0e700e">加的斯</span></div>
<div class="t" style="left:297px;top:682px;width:88px;height:25px;line-height:25px;"><span style="color:#c81414">1-5</span>(0-3)</div>
<div class="t" style="left:385px;top:682px;width:37px;height:25px;line-height:25px;">5-1</div>
<div class="t" style="left:422px;top:682px;width:103px;height:25px;line-height:25px;"><span style="color:#333">莱里亚</span></div>
<div class="t" style="left:525px;top:682px;width:55px;height:25px;line-height:25px;">0.66</div>
<div class="t" style="left:580px;top:682px;width:67px;height:25px;line-height:25px;">半/一</div>
<div class="t" style="left:647px;top:682px;width:58px;height:25px;line-height:25px;">1.19</div>
<div class="t" style="left:705px;top:682px;width:64px;height:25px;line-height:25px;">1.55</div>
<div class="t" style="left:769px;top:682px;width:64px;height:25px;line-height:25px;">4.08</div>
<div class="t" style="left:833px;top:682px;width:65px;height:25px;line-height:25px;">4.63</div>
<div class="t" style="left:898px;top:682px;width:37px;height:25px;line-height:25px;color:#1818a8">负</div>
<div class="t" style="left:935px;top:682px;width:37px;height:25px;line-height:25px;color:#1818a8">输</div>
<div class="t" style="left:972px;top:682px;width:56px;height:25px;line-height:25px;color:#c81414">大</div>
<div class="t" style="left:1px;top:708px;width:1028px;height:25px;line-height:25px;letter-spacing:0.2px">近<span style="color:#c81414">10</span>场,胜4平4负2, 胜率:<span style="color:#c81414">40%</span> 让胜率:<span style="color:#c81414">40%</span> 大率:<span style="color:#c81414">50%</span> 单率:<span style="color:#c81414">50%</span></div></body></html>
